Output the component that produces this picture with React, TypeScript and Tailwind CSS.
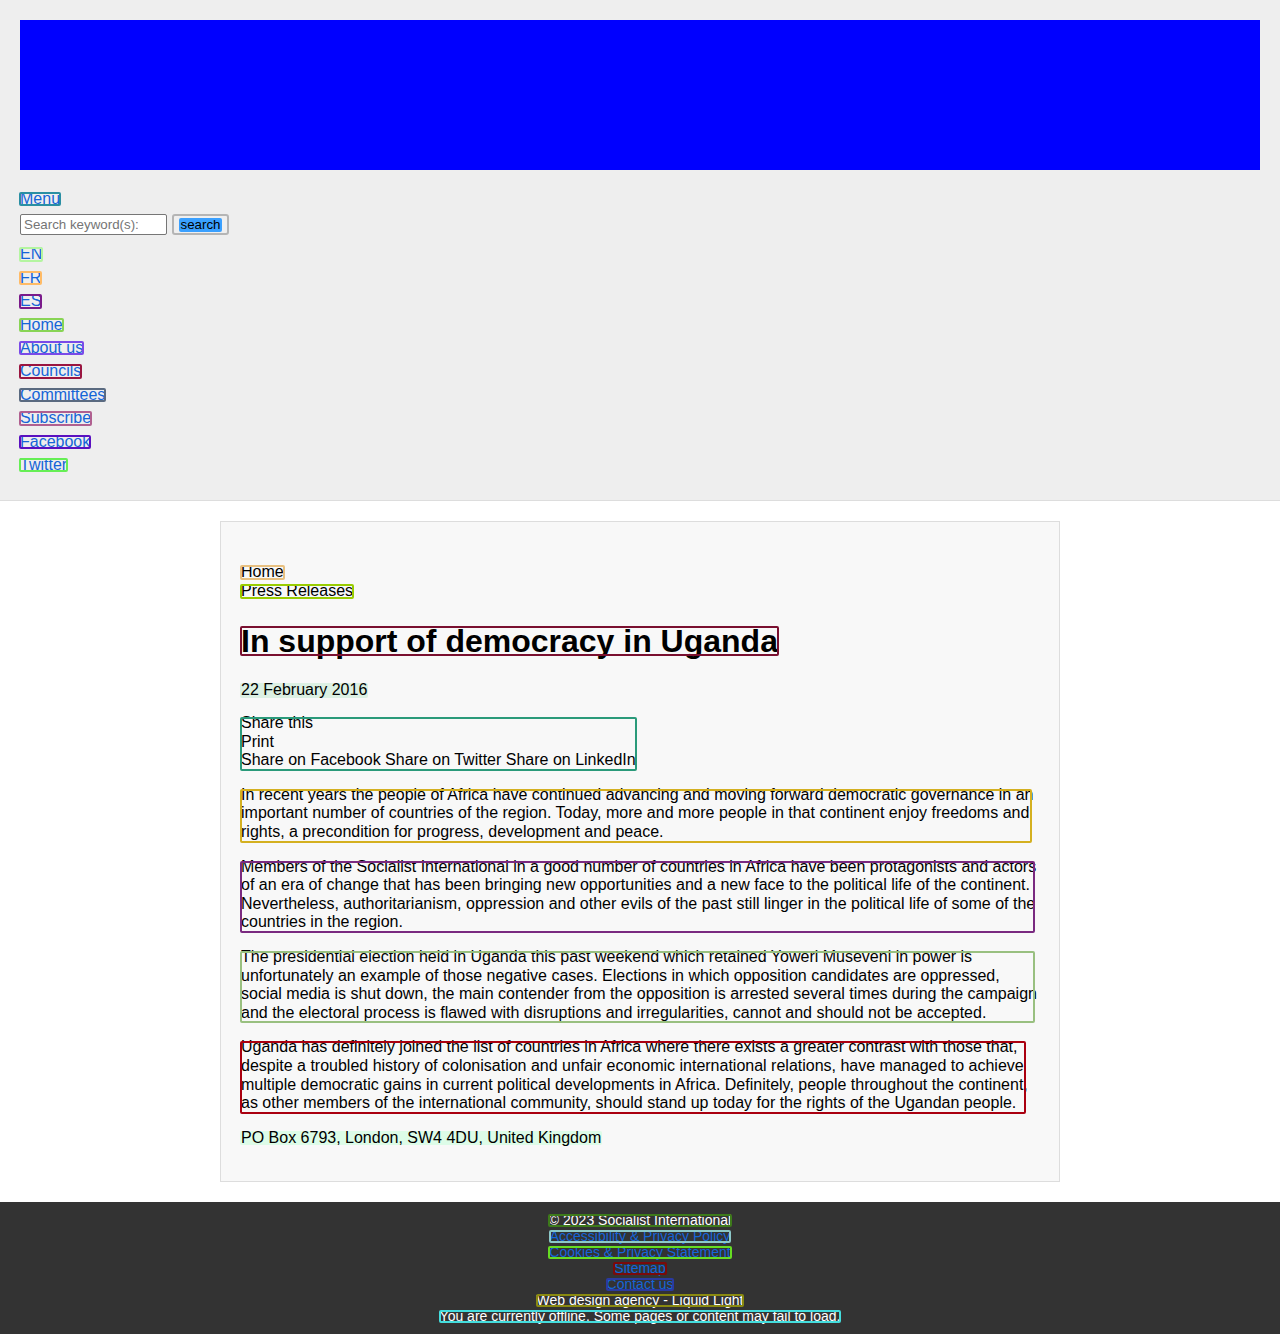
import type { ReactNode } from 'react'

function Mark({ children, ring = '', fill = '', inset = 'top-[2px] bottom-[2px] -left-px -right-px' }: { children: ReactNode; ring?: string; fill?: string; inset?: string }) {
  return (
    <span className="relative isolate inline-block">
      {fill && <span className={`absolute -z-10 rounded-[2px] ${inset} ${fill}`} />}
      {children}
      {ring && <span className={`pointer-events-none absolute rounded-[2px] border-2 ${inset} ${ring}`} />}
    </span>
  )
}

const navLinks = [
  { label: 'EN', ring: 'border-[#b4f5a0]' },
  { label: 'FR', ring: 'border-[#ffbb66]' },
  { label: 'ES', ring: 'border-[#7a1a8a]' },
  { label: 'Home', ring: 'border-[#88d455]' },
  { label: 'About us', ring: 'border-[#7a4ae8]' },
  { label: 'Councils', ring: 'border-[#9a1540]' },
  { label: 'Committees', ring: 'border-[#5a6a80]' },
  { label: 'Subscribe', ring: 'border-[#b06090]' },
  { label: 'Facebook', ring: 'border-[#5a10c0]' },
  { label: 'Twitter', ring: 'border-[#66ee55]' },
]

const paragraphs = [
  {
    ring: 'border-[#d4b020]',
    inset: 'top-[3px] -bottom-px -left-px right-[7px]',
    text: 'In recent years the people of Africa have continued advancing and moving forward democratic governance in an important number of countries of the region. Today, more and more people in that continent enjoy freedoms and rights, a precondition for progress, development and peace.',
  },
  {
    ring: 'border-[#7a2a80]',
    inset: 'top-[3px] -bottom-px -left-px right-[4px]',
    text: 'Members of the Socialist International in a good number of countries in Africa have been protagonists and actors of an era of change that has been bringing new opportunities and a new face to the political life of the continent. Nevertheless, authoritarianism, oppression and other evils of the past still linger in the political life of some of the countries in the region.',
  },
  {
    ring: 'border-[#99c080]',
    inset: 'top-[3px] -bottom-px -left-px right-[4px]',
    text: 'The presidential election held in Uganda this past weekend which retained Yoweri Museveni in power is unfortunately an example of those negative cases. Elections in which opposition candidates are oppressed, social media is shut down, the main contender from the opposition is arrested several times during the campaign and the electoral process is flawed with disruptions and irregularities, cannot and should not be accepted.',
  },
  {
    ring: 'border-[#aa0010]',
    inset: 'top-[3px] -bottom-px -left-px right-[13px]',
    text: 'Uganda has definitely joined the list of countries in Africa where there exists a greater contrast with those that, despite a troubled history of colonisation and unfair economic international relations, have managed to achieve multiple democratic gains in current political developments in Africa. Definitely, people throughout the continent, as other members of the international community, should stand up today for the rights of the Ugandan people.',
  },
]

const footerLines = [
  { label: '© 2023 Socialist International', ring: 'border-[#3d7a1a]', link: false },
  { label: 'Accessibility & Privacy Policy', ring: 'border-[#8cc8c8]', link: true },
  { label: 'Cookies & Privacy Statement', ring: 'border-[#66dd22]', link: true },
  { label: 'Sitemap', ring: 'border-[#7a0a0a]', link: true },
  { label: 'Contact us', ring: 'border-[#2a3aa0]', link: true },
  { label: 'Web design agency - Liquid Light', ring: 'border-[#8a8a10]', link: false },
  { label: 'You are currently offline. Some pages or content may fail to load.', ring: 'border-[#44dddd]', link: false },
]

export default function App() {
  return (
    <div className="min-h-screen bg-white font-['Liberation_Sans',Arial,sans-serif] text-[16px] leading-[18.4px] text-black">
      <header className="border-b border-[#dddddd] bg-[#eeeeee] px-5 pt-5 pb-[26px]">
        <div className="h-[150px] bg-[#0000ff]" />
        <nav className="mt-5">
          <div>
            <Mark ring="border-[#2a8fa3]">
              <a href="#" className="text-[#1565d8]">Menu</a>
            </Mark>
          </div>
          <form className="mt-[6px] flex items-center gap-[5px]">
            <input
              type="text"
              placeholder="Search keyword(s):"
              className="h-[21px] w-[147px] rounded-[2px] border border-[#767676] bg-white px-[3px] text-[13.33px] placeholder:text-[#757575]"
            />
            <button type="button" className="flex h-[21px] w-[57px] items-center justify-center rounded-[3px] border-2 border-[#b5b5b5] bg-[#efefef] text-[13.33px] leading-[14px]">
              <Mark fill="bg-[#3aa0ff]" inset="top-0 bottom-0 -left-px -right-px">search</Mark>
            </button>
          </form>
          <ul className="mt-[10px] flex flex-col items-start gap-[5px]">
            {navLinks.map((item) => (
              <li key={item.label}>
                <Mark ring={item.ring}>
                  <a href="#" className="text-[#1565d8]">{item.label}</a>
                </Mark>
              </li>
            ))}
          </ul>
        </nav>
      </header>

      <main className="p-5">
        <article className="mx-auto w-[840px] border border-[#dddddd] bg-[#f8f8f8] px-5 pt-[41px] pb-[34px] leading-[18.6px]">
          <ul className="flex flex-col items-start">
            <li>
              <Mark ring="border-[#e8c080]">Home</Mark>
            </li>
            <li>
              <Mark ring="border-[#99cc00]">Press Releases</Mark>
            </li>
          </ul>

          <h1 className="mt-[22px] text-[32px] font-bold leading-[36.8px]">
            <Mark ring="border-[#7a1030]" inset="top-[3px] bottom-[3px] -left-px -right-px">In support of democracy in Uganda</Mark>
          </h1>

          <div className="mt-[22px]">
            <Mark fill="bg-[#dcf0e3]">22 February 2016</Mark>
          </div>

          <div className="relative mt-[14px] w-fit">
            <div>Share this</div>
            <div>Print</div>
            <div>Share on Facebook Share on Twitter Share on LinkedIn</div>
            <span className="pointer-events-none absolute top-[3px] -bottom-px -left-px -right-px rounded-[2px] border-2 border-[#2a9a7a]" />
          </div>

          {paragraphs.map((p) => (
            <p key={p.ring} className="relative mt-4">
              {p.text}
              <span className={`pointer-events-none absolute rounded-[2px] border-2 ${p.inset} ${p.ring}`} />
            </p>
          ))}

          <p className="mt-4">
            <Mark fill="bg-[#ddfce8]">PO Box 6793, London, SW4 4DU, United Kingdom</Mark>
          </p>
        </article>
      </main>

      <footer className="bg-[#333333] py-[10px] text-center text-[14px] leading-4 text-white">
        {footerLines.map((line) => (
          <div key={line.label}>
            <Mark ring={line.ring} inset="top-[2px] bottom-[1px] -left-px -right-px">
              {line.link ? <a href="#" className="text-[#1565d8]">{line.label}</a> : line.label}
            </Mark>
          </div>
        ))}
      </footer>
    </div>
  )
}
